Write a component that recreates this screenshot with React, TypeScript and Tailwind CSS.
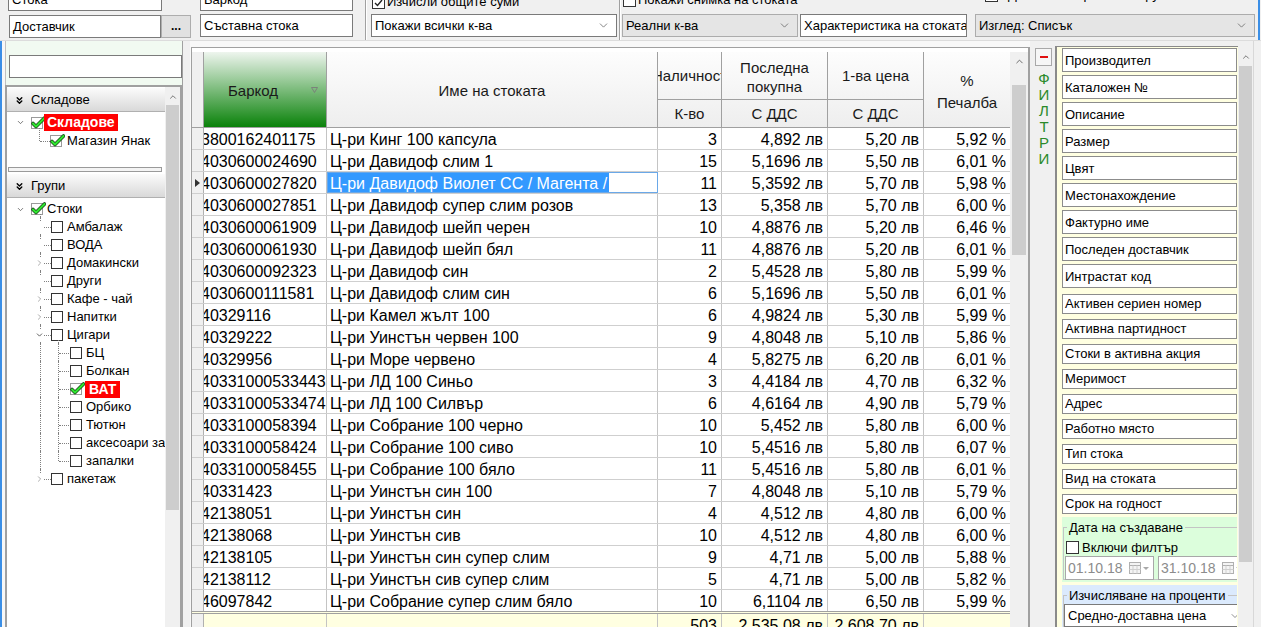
import React from "react";
import { ChevronDown, ChevronRight, ChevronUp, ChevronsDown } from "lucide-react";

type Row = [string, string, string, string, string, string];

const data: Row[] = [
  ["3800162401175", "Ц-ри Кинг 100 капсула", "3", "4,892 лв", "5,20 лв", "5,92 %"],
  ["4030600024690", "Ц-ри Давидоф слим 1", "15", "5,1696 лв", "5,50 лв", "6,01 %"],
  ["4030600027820", "Ц-ри Давидоф Виолет СС / Магента /", "11", "5,3592 лв", "5,70 лв", "5,98 %"],
  ["4030600027851", "Ц-ри Давидоф супер слим розов", "13", "5,358 лв", "5,70 лв", "6,00 %"],
  ["4030600061909", "Ц-ри Давидоф шейп черен", "10", "4,8876 лв", "5,20 лв", "6,46 %"],
  ["4030600061930", "Ц-ри Давидоф шейп бял", "11", "4,8876 лв", "5,20 лв", "6,01 %"],
  ["4030600092323", "Ц-ри Давидоф син", "2", "5,4528 лв", "5,80 лв", "5,99 %"],
  ["4030600111581", "Ц-ри Давидоф слим син", "6", "5,1696 лв", "5,50 лв", "6,01 %"],
  ["40329116", "Ц-ри Камел жълт 100", "6", "4,9824 лв", "5,30 лв", "5,99 %"],
  ["40329222", "Ц-ри Уинстън червен 100", "9", "4,8048 лв", "5,10 лв", "5,86 %"],
  ["40329956", "Ц-ри Море червено", "4", "5,8275 лв", "6,20 лв", "6,01 %"],
  ["40331000533443", "Ц-ри ЛД 100 Синьо", "3", "4,4184 лв", "4,70 лв", "6,32 %"],
  ["40331000533474", "Ц-ри ЛД 100 Силвър", "6", "4,6164 лв", "4,90 лв", "5,79 %"],
  ["4033100058394", "Ц-ри Собрание 100 черно", "10", "5,452 лв", "5,80 лв", "6,00 %"],
  ["4033100058424", "Ц-ри Собрание 100 сиво", "10", "5,4516 лв", "5,80 лв", "6,07 %"],
  ["4033100058455", "Ц-ри Собрание 100 бяло", "11", "5,4516 лв", "5,80 лв", "6,01 %"],
  ["40331423", "Ц-ри Уинстън син 100", "7", "4,8048 лв", "5,10 лв", "5,79 %"],
  ["42138051", "Ц-ри Уинстън син", "4", "4,512 лв", "4,80 лв", "6,00 %"],
  ["42138068", "Ц-ри Уинстън сив", "10", "4,512 лв", "4,80 лв", "6,00 %"],
  ["42138105", "Ц-ри Уинстън син супер слим", "9", "4,71 лв", "5,00 лв", "5,88 %"],
  ["42138112", "Ц-ри Уинстън сив супер слим", "5", "4,71 лв", "5,00 лв", "5,82 %"],
  ["46097842", "Ц-ри Собрание супер слим бяло", "10", "6,1104 лв", "6,50 лв", "5,99 %"],
];

const filtersTall = [
  "Производител",
  "Каталожен №",
  "Описание",
  "Размер",
  "Цвят",
  "Местонахождение",
  "Фактурно име",
  "Последен доставчик",
  "Интрастат код",
];
const filtersShort = [
  "Активен сериен номер",
  "Активна партидност",
  "Стоки в активна акция",
  "Меримост",
  "Адрес",
  "Работно място",
  "Тип стока",
  "Вид на стоката",
  "Срок на годност",
];

function Cb({ checked }: { checked?: boolean }) {
  return (
    <span className="w-[13px] h-[13px] border border-[#333] bg-white shrink-0 flex items-center justify-center">
      {checked && (
        <svg width="9" height="8" viewBox="0 0 9 8">
          <path d="M1 4 L3.5 6.5 L8 1" stroke="#222" strokeWidth="1.4" fill="none" />
        </svg>
      )}
    </span>
  );
}

function GreenCheck() {
  return (
    <svg width="15" height="14" viewBox="0 0 15 14" className="shrink-0">
      <rect x="0.5" y="1.5" width="11" height="11" fill="#fff" stroke="#9a9a9a" />
      <path d="M2 7.5 L5 10.5 L13.5 2" fill="none" stroke="#1c4d1c" strokeWidth="3.6" strokeLinecap="round" strokeLinejoin="round" />
      <path d="M2 7.5 L5 10.5 L13.5 2" fill="none" stroke="#2ee62e" strokeWidth="2" strokeLinecap="round" strokeLinejoin="round" />
    </svg>
  );
}

function TreeBox() {
  return <span className="w-[12px] h-[12px] border border-[#333] bg-white shrink-0" />;
}

function Box({ className, children }: { className: string; children?: React.ReactNode }) {
  return (
    <div className={"h-[23px] border border-[#7a7a7a] bg-white flex items-center pl-[3px] whitespace-nowrap overflow-hidden " + className}>
      {children}
    </div>
  );
}

function TopBar() {
  return (
    <div className="h-[41px] shrink-0 overflow-hidden border-b border-[#dcdcdc] text-[13px]">
      <div className="flex items-start mt-[-12px]">
        <div className="ml-[8px] w-[184px] flex flex-col">
          <Box className="w-[154px]">Стока</Box>
          <div className="flex mt-[4px] ml-[1px]">
            <Box className="w-[152px]">Доставчик</Box>
            <div className="w-[30px] h-[23px] border border-[#adadad] bg-[#e1e1e1] flex items-end justify-center pb-[5px] font-bold text-[12px] leading-none">
              ...
            </div>
          </div>
        </div>
        <div className="ml-[8px] w-[153px] flex flex-col">
          <Box className="w-[153px]">Баркод</Box>
          <Box className="w-[153px] mt-[3px]">Съставна стока</Box>
        </div>
        <div className="ml-[12px] w-[2px] h-[53px] border-l border-[#a0a0a0] border-r border-r-white" />
        <div className="ml-[4px] w-[246px] flex flex-col">
          <div className="h-[23px] flex items-end pb-[2px] pl-[1px] gap-[2px] whitespace-nowrap">
            <Cb checked />
            <span className="leading-[14px]">Изчисли общите суми</span>
          </div>
          <div className="mt-[3px] h-[23px] border border-[#7a7a7a] bg-white flex items-center pl-[3px] pr-[6px]">
            <span>Покажи всички к-ва</span>
            <ChevronDown className="ml-auto text-[#606060]" size={13} strokeWidth={1.4} />
          </div>
        </div>
        <div className="ml-[2px] w-[2px] h-[53px] border-l border-[#a0a0a0] border-r border-r-white" />
        <div className="ml-[1px] w-[345px] flex flex-col">
          <div className="h-[23px] flex items-end pb-[4px] pl-[1px] gap-[2px] whitespace-nowrap">
            <Cb />
            <span className="leading-[14px]">Покажи снимка на стоката</span>
          </div>
          <div className="mt-[3px] flex">
            <div className="w-[176px] h-[23px] border border-[#acacac] bg-[#e5e5e5] flex items-center pl-[3px] pr-[6px]">
              <span>Реални к-ва</span>
              <ChevronDown className="ml-auto text-[#606060]" size={13} strokeWidth={1.4} />
            </div>
            <Box className="w-[167px] ml-[2px]">Характеристика на стоката</Box>
          </div>
        </div>
        <div className="ml-[8px] w-[280px] flex flex-col">
          <div className="h-[23px] flex items-end pb-[9px] pl-[10px] gap-[10px] whitespace-nowrap">
            <Cb />
            <span className="leading-[14px]">Детайлно търсене по група</span>
          </div>
          <div className="mt-[3px] h-[23px] border border-[#acacac] bg-[#e5e5e5] flex items-center pl-[3px] pr-[6px]">
            <span>Изглед: Списък</span>
            <ChevronDown className="ml-auto text-[#606060]" size={13} strokeWidth={1.4} />
          </div>
        </div>
        <div className="ml-[3px] w-[2px] h-[53px] bg-[#3a8ee6]" />
      </div>
    </div>
  );
}

function SectionHeader({ title }: { title: string }) {
  return (
    <div className="h-[24px] shrink-0 flex items-center pl-[7px] gap-[6px] pt-[1px] bg-[linear-gradient(to_bottom,#fbfbfb,#d9d9d9)] border-b border-[#b0b0b0] text-[13px]">
      <ChevronsDown size={11} strokeWidth={3} className="text-black" />
      <span>{title}</span>
    </div>
  );
}

type GNode = {
  label: string;
  level: 0 | 1 | 2;
  exp?: "open" | "closed";
  green?: boolean;
  red?: boolean;
  last?: boolean;
};

const groups: GNode[] = [
  { label: "Стоки", level: 0, exp: "open", green: true },
  { label: "Амбалаж", level: 1 },
  { label: "ВОДА", level: 1 },
  { label: "Домакински", level: 1, exp: "closed" },
  { label: "Други", level: 1 },
  { label: "Кафе - чай", level: 1, exp: "closed" },
  { label: "Напитки", level: 1, exp: "closed" },
  { label: "Цигари", level: 1, exp: "open" },
  { label: "БЦ", level: 2 },
  { label: "Болкан", level: 2 },
  { label: "ВАТ", level: 2, green: true, red: true },
  { label: "Орбико", level: 2 },
  { label: "Тютюн", level: 2 },
  { label: "аксесоари за цигари", level: 2 },
  { label: "запалки", level: 2, last: true },
  { label: "пакетаж", level: 1, exp: "closed", last: true },
];

function TreeRow({ n }: { n: GNode }) {
  if (n.level === 0) {
    return (
      <div className="relative h-[18px] pt-[2px] flex items-center whitespace-nowrap">
        <span className="absolute left-[33px] top-[15px] bottom-0 border-l border-dotted border-[#808080]" />
        <span className="w-[9px] shrink-0" />
        <span className="w-[9px] shrink-0 flex justify-center">
          <ChevronDown size={11} strokeWidth={2} className="text-[#505050]" />
        </span>
        <span className="w-[6px] shrink-0" />
        <GreenCheck />
        <span className="ml-[1px] text-[13px]">{n.label}</span>
      </div>
    );
  }
  if (n.level === 1) {
    return (
      <div className="relative h-[18px] pt-[2px] flex items-center whitespace-nowrap text-[13px]">
        {n.last ? (
          <span className="absolute left-[33px] top-0 h-[10px] border-l border-dotted border-[#808080]" />
        ) : (
          <span className="absolute left-[33px] top-0 bottom-0 border-l border-dotted border-[#808080]" />
        )}
        <span className="absolute left-[36px] top-[10px] w-[8px] border-t border-dotted border-[#808080]" />
        {n.exp === "open" && <span className="absolute left-[51px] top-[15px] bottom-0 border-l border-dotted border-[#808080]" />}
        <span className="w-[28px] shrink-0" />
        <span className="w-[9px] h-[12px] shrink-0 flex items-center justify-center relative bg-white">
          {n.exp === "closed" && <ChevronRight size={12} strokeWidth={2.2} className="text-[#9a9a9a]" />}
          {n.exp === "open" && <ChevronDown size={12} strokeWidth={2.2} className="text-[#404040]" />}
        </span>
        <span className="w-[7px] shrink-0" />
        {n.green ? <GreenCheck /> : <TreeBox />}
        <span className={n.green ? "ml-[2px]" : "ml-[4px]"}>{n.label}</span>
      </div>
    );
  }
  return (
    <div className="relative h-[18px] pt-[2px] flex items-center whitespace-nowrap text-[13px]">
      <span className="absolute left-[33px] top-0 bottom-0 border-l border-dotted border-[#808080]" />
      {n.last ? (
        <span className="absolute left-[51px] top-0 h-[10px] border-l border-dotted border-[#808080]" />
      ) : (
        <span className="absolute left-[51px] top-0 bottom-0 border-l border-dotted border-[#808080]" />
      )}
      <span className="absolute left-[52px] top-[10px] w-[10px] border-t border-dotted border-[#808080]" />
      <span className="w-[63px] shrink-0" />
      {n.green ? <GreenCheck /> : <TreeBox />}
      {n.red ? (
        <span className="h-[17px] flex items-center pl-[4px] pr-[4px] bg-[#ff0000] text-white font-bold text-[14px]">{n.label}</span>
      ) : (
        <span className="ml-[4px]">{n.label}</span>
      )}
    </div>
  );
}

function LeftPanel() {
  return (
    <div className="w-[190px] shrink-0 flex">
      <div className="w-[2px] shrink-0 bg-[#3a8ee6]" />
      <div className="w-[3px] shrink-0 bg-[#f7f7f7]" />
      <div className="w-[177px] shrink-0 flex flex-col">
        <div className="h-[44px] shrink-0 bg-[#f1faf1] pt-[14px] pl-[3px] border-l border-[#c0c0c0]">
          <div className="h-[23px] border border-[#7a7a7a] bg-white" />
        </div>
        <div className="flex-1 min-h-0 flex border-t-2 border-l-2 border-r-2 border-[#a0a0a0] bg-white">
          <div className="w-[158px] shrink-0 overflow-hidden pt-[1px] flex flex-col">
            <SectionHeader title="Складове" />
            <div className="pt-[1px]">
              <div className="relative h-[18px] pt-[1px] flex items-center whitespace-nowrap">
                <span className="w-[9px] shrink-0" />
                <span className="w-[9px] shrink-0 flex justify-center">
                  <ChevronDown size={11} strokeWidth={2} className="text-[#505050]" />
                </span>
                <span className="w-[6px] shrink-0" />
                <GreenCheck />
                <span className="ml-[-2px] h-[17px] flex items-center px-[3px] bg-[#ff0000] text-white font-bold text-[14px]">Складове</span>
              </div>
              <div className="relative h-[18px] pt-[2px] flex items-center whitespace-nowrap text-[13px]">
                <span className="absolute left-[32px] top-[-3px] h-[13px] border-l border-dotted border-[#808080]" />
                <span className="absolute left-[33px] top-[10px] w-[10px] border-t border-dotted border-[#808080]" />
                <span className="w-[43px] shrink-0" />
                <GreenCheck />
                <span className="ml-[2px]">Магазин Янак</span>
              </div>
            </div>
            <div className="mt-[18px] h-[5px] ml-[1px] mr-[3px] border border-[#9a9a9a] bg-[#f4f4f4]" />
            <div className="mt-[2px]">
              <SectionHeader title="Групи" />
            </div>
            <div className="pt-[1px]">
              {groups.map((n, i) => (
                <TreeRow key={i} n={n} />
              ))}
            </div>
          </div>
          <div className="w-[15px] shrink-0 flex flex-col bg-[#f0f0f0] pt-[1px]">
            <div className="h-[17px] flex items-center justify-center">
              <ChevronUp size={10} strokeWidth={2} className="text-[#606060]" />
            </div>
            <div className="h-[405px] mx-[1px] bg-[#cdcdcd]" />
          </div>
        </div>
      </div>
      <div className="w-[8px] shrink-0 border-l border-[#a0a0a0] bg-[#f0f0f0]" />
    </div>
  );
}

function Grid() {
  const cellB = "border-r border-[#c4c4c4]";
  return (
    <div className="w-[840px] shrink-0 pl-[1px] pt-[6px] bg-[#f8f8f8] flex flex-col">
      <div className="flex-1 min-h-0 flex border-t border-l border-[#a0a0a0] border-r-2 border-r-[#a0a0a0] bg-white pt-[4px] overflow-hidden">
        <div className="w-[818px] shrink-0 flex flex-col">
          {/* header */}
          <div className="flex h-[76px] shrink-0 border-b border-[#a0a0a0] bg-[linear-gradient(to_bottom,#fdfdfd,#eeeeee)] text-[15px] text-[#1a1a1a]">
            <div className="w-[12px] shrink-0 border-r border-[#a0a0a0] bg-[#f0f0f0]" />
            <div className="w-[123px] shrink-0 border-r border-[#a0a0a0] bg-[linear-gradient(to_bottom,#eef5ee,#0a820a)] flex items-center pl-[24px] pr-[8px] pt-[3px]">
              <span>Баркод</span>
              <svg width="7" height="6" viewBox="0 0 7 6" className="ml-auto mb-[2px]">
                <path d="M0.5 0.5 L6.5 0.5 L3.5 5.5 Z" fill="none" stroke="#7a7a7a" strokeWidth="0.9" />
              </svg>
            </div>
            <div className="w-[331px] shrink-0 border-r border-[#a0a0a0] flex items-center justify-center pt-[3px]">Име на стоката</div>
            <div className="w-[64px] shrink-0 border-r border-[#a0a0a0] flex flex-col">
              <div className="h-[48px] border-b border-[#a0a0a0] flex items-center justify-center overflow-hidden whitespace-nowrap pt-[2px]">Наличност</div>
              <div className="flex-1 flex items-center justify-center pt-[2px]">К-во</div>
            </div>
            <div className="w-[106px] shrink-0 border-r border-[#a0a0a0] flex flex-col">
              <div className="h-[48px] border-b border-[#a0a0a0] flex items-center justify-center text-center leading-[19px] pt-[2px]">
                Последна
                <br />
                покупна
              </div>
              <div className="flex-1 flex items-center justify-center pt-[2px]">С ДДС</div>
            </div>
            <div className="w-[96px] shrink-0 border-r border-[#a0a0a0] flex flex-col">
              <div className="h-[48px] border-b border-[#a0a0a0] flex items-center justify-center pt-[2px]">1-ва цена</div>
              <div className="flex-1 flex items-center justify-center pt-[2px]">С ДДС</div>
            </div>
            <div className="w-[86px] shrink-0 flex items-center justify-center text-center leading-[22px] pt-[4px]">
              %
              <br />
              Печалба
            </div>
          </div>
          {/* rows */}
          <div className="text-[16px]">
            {data.map((r, i) => (
              <div key={i} className="flex h-[22px] border-b border-[#cfcfcf]">
                <div className="w-[12px] shrink-0 border-r border-[#b0b0b0] bg-[#f0f0f0] flex items-center justify-center">
                  {i === 2 && (
                    <svg width="5" height="8" viewBox="0 0 5 8">
                      <path d="M0 0 L5 4 L0 8 Z" fill="#333" />
                    </svg>
                  )}
                </div>
                <div className={"w-[123px] shrink-0 overflow-hidden whitespace-nowrap flex items-center pt-[3px] " + cellB}>
                  <span className="ml-[-3px]">{r[0]}</span>
                </div>
                {i === 2 ? (
                  <div className={"w-[331px] shrink-0 overflow-hidden whitespace-nowrap flex items-center pl-[1px] outline outline-1 outline-[#6aa8e8] -outline-offset-1 " + cellB}>
                    <span className="h-[20px] flex items-center px-[2px] pt-[3px] bg-[#3399ff] text-white">{r[1]}</span>
                  </div>
                ) : (
                  <div className={"w-[331px] shrink-0 overflow-hidden whitespace-nowrap flex items-center pl-[3px] pt-[3px] " + cellB}>{r[1]}</div>
                )}
                <div className={"w-[64px] shrink-0 flex items-center justify-end pr-[4px] pt-[3px] " + cellB}>{r[2]}</div>
                <div className={"w-[106px] shrink-0 flex items-center justify-end pr-[4px] pt-[3px] whitespace-nowrap " + cellB}>{r[3]}</div>
                <div className={"w-[96px] shrink-0 flex items-center justify-end pr-[4px] pt-[3px] whitespace-nowrap " + cellB}>{r[4]}</div>
                <div className="w-[86px] shrink-0 flex items-center justify-end pr-[4px] pt-[3px] whitespace-nowrap">{r[5]}</div>
              </div>
            ))}
            <div className="flex h-[22px] border-t-[3px] border-double border-[#a0a0a0] bg-[#ffffe1] mt-[-1px]">
              <div className="w-[12px] shrink-0 border-r border-[#b0b0b0] bg-[#f0f0f0]" />
              <div className={"w-[123px] shrink-0 " + cellB} />
              <div className={"w-[331px] shrink-0 " + cellB} />
              <div className={"w-[64px] shrink-0 flex items-center justify-end pr-[4px] pt-[4px] " + cellB}>503</div>
              <div className={"w-[106px] shrink-0 flex items-center justify-end pr-[4px] pt-[4px] whitespace-nowrap " + cellB}>2 535,08 лв</div>
              <div className={"w-[96px] shrink-0 flex items-center justify-end pr-[4px] pt-[4px] whitespace-nowrap " + cellB}>2 608,70 лв</div>
              <div className="w-[86px] shrink-0" />
            </div>
          </div>
        </div>
        <div className="w-[18px] shrink-0 flex flex-col bg-[#f0f0f0]">
          <div className="h-[33px] flex justify-center pt-[4px]">
            <ChevronUp size={11} strokeWidth={2} className="text-[#606060]" />
          </div>
          <div className="h-[170px] mx-[2px] bg-[#cdcdcd]" />
        </div>
      </div>
    </div>
  );
}

function CalIcon() {
  return (
    <svg width="22" height="12" viewBox="0 0 22 12" className="shrink-0">
      <rect x="0.5" y="0.5" width="11" height="11" fill="#f4f4f4" stroke="#b0b0b0" />
      <line x1="0.5" y1="3.5" x2="11.5" y2="3.5" stroke="#b0b0b0" />
      <line x1="4" y1="3.5" x2="4" y2="11.5" stroke="#d0d0d0" />
      <line x1="8" y1="3.5" x2="8" y2="11.5" stroke="#d0d0d0" />
      <line x1="0.5" y1="7.5" x2="11.5" y2="7.5" stroke="#d0d0d0" />
      <path d="M14 5 L20 5 L17 8 Z" fill="#a8a8a8" />
    </svg>
  );
}

function RightPanel() {
  return (
    <div className="w-[231px] shrink-0 flex bg-[#f0f0f0] text-[13px]">
      <div className="w-[25px] shrink-0 flex flex-col">
        <div className="mt-[7px] ml-[5px] w-[17px] h-[18px] border border-[#a8a8a8] bg-[#f6f6f6] flex items-center justify-center">
          <span className="w-[8px] h-[2px] bg-[#e01010]" />
        </div>
        <div className="mt-[5px] pl-[3px] flex flex-col items-center text-[15px] leading-[16px] text-[#2a8a2a]">
          <span>Ф</span>
          <span>И</span>
          <span>Л</span>
          <span>Т</span>
          <span>Р</span>
          <span>И</span>
        </div>
      </div>
      <div className="w-[183px] shrink-0 mt-[5px] border-l-2 border-t border-[#8a8a8a] bg-[#ffffe1] pl-[5px] pt-[1px] overflow-hidden">
        {filtersTall.map((f, i) => (
          <div
            key={f}
            className={
              "w-[175px] h-[24px] border border-[#8c8c8c] bg-white flex items-center pl-[2px] pt-[1px] whitespace-nowrap " +
              (i === filtersTall.length - 1 ? "mb-[6px]" : "mb-[3px]")
            }
          >
            {f}
          </div>
        ))}
        {filtersShort.map((f, i) => (
          <div
            key={f}
            className={
              "w-[175px] h-[20px] border border-[#8c8c8c] bg-white flex items-center pl-[2px] whitespace-nowrap " +
              (i === filtersShort.length - 1 ? "mb-[3px]" : "mb-[5px]")
            }
          >
            {f}
          </div>
        ))}
        <div className="w-[175px] h-[65px] bg-[#dcfedc] pt-[3px] pl-[1px] overflow-hidden">
          <fieldset className="w-[185px] h-[60px] border border-[#c4c4c4]">
            <legend className="ml-[3px] px-[2px] leading-[15px]">Дата на създаване</legend>
            <div className="mt-[5px] ml-[2px] flex items-center gap-[3px] h-[15px]">
              <Cb />
              <span>Включи филтър</span>
            </div>
            <div className="mt-[1px] ml-[1px] flex">
              <div className="w-[89px] h-[24px] border border-[#a8a8a8] bg-white flex items-center pl-[2px] pr-[2px] text-[#8c8c8c] text-[14px]">
                <span>01.10.18</span>
                <span className="ml-auto">
                  <CalIcon />
                </span>
              </div>
              <div className="ml-[4px] w-[89px] h-[24px] border border-[#a8a8a8] bg-white flex items-center pl-[2px] pr-[2px] text-[#8c8c8c] text-[14px]">
                <span>31.10.18</span>
                <span className="ml-auto">
                  <CalIcon />
                </span>
              </div>
            </div>
          </fieldset>
        </div>
        <div className="w-[175px] h-[60px] mt-[3px] bg-[#dbeafd] pt-[3px] pl-[1px] overflow-hidden">
          <fieldset className="w-[185px] h-[60px] border border-[#c4c4c4]">
            <legend className="ml-[3px] px-[2px] leading-[15px]">Изчисляване на проценти</legend>
            <div className="mt-[1px] w-[174px] h-[23px] border border-[#7a7a7a] bg-white flex items-center pl-[3px]">
              <span>Средно-доставна цена</span>
              <ChevronDown className="ml-auto mr-[-4px] text-[#606060]" size={12} strokeWidth={1.4} />
            </div>
          </fieldset>
        </div>
      </div>
      <div className="w-[15px] shrink-0 mt-[6px] flex flex-col bg-[#f0f0f0]">
        <div className="h-[19px] flex items-center justify-center">
          <ChevronUp size={10} strokeWidth={2} className="text-[#606060]" />
        </div>
        <div className="h-[496px] mx-[1px] bg-[#cdcdcd]" />
      </div>
      <div className="w-[8px] shrink-0 border-l border-[#d8d8d8]" />
    </div>
  );
}

export default function App() {
  return (
    <div className="w-[1261px] h-[627px] overflow-hidden bg-[#f0f0f0] flex flex-col font-['Liberation_Sans',Arial,sans-serif] text-black">
      <TopBar />
      <div className="flex flex-1 min-h-0">
        <LeftPanel />
        <Grid />
        <RightPanel />
      </div>
    </div>
  );
}
